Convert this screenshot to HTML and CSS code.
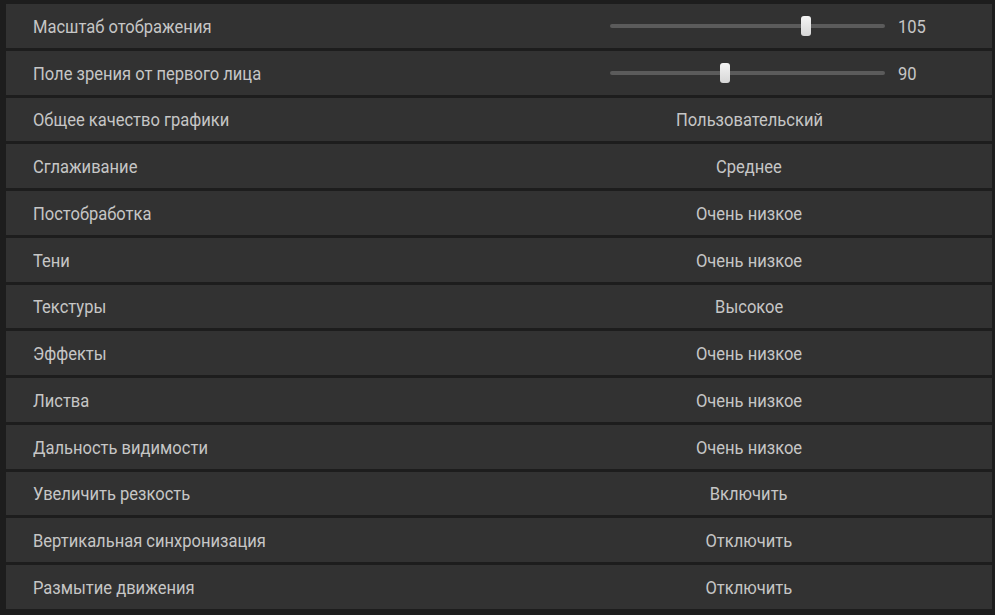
FILE: index.html
```html
<!DOCTYPE html>
<html lang="ru">
<head>
    <meta charset="UTF-8">
    <title>Настройки графики</title>
    <link rel="stylesheet" href="styles.css">
</head>
<body>
    <div class="settings">
        <div class="row">
            <div class="label"><span>Масштаб отображения</span></div>
            <div class="control slider-control">
                <div class="slider"><div class="track"></div><div class="thumb" style="left: 69.5%"></div></div>
                <div class="slider-value"><span>105</span></div>
            </div>
        </div>
        <div class="row">
            <div class="label"><span>Поле зрения от первого лица</span></div>
            <div class="control slider-control">
                <div class="slider"><div class="track"></div><div class="thumb" style="left: 40%"></div></div>
                <div class="slider-value"><span>90</span></div>
            </div>
        </div>
        <div class="row"><div class="label"><span>Общее качество графики</span></div><div class="control"><span>Пользовательский</span></div></div>
        <div class="row"><div class="label"><span>Сглаживание</span></div><div class="control"><span>Среднее</span></div></div>
        <div class="row"><div class="label"><span>Постобработка</span></div><div class="control"><span>Очень низкое</span></div></div>
        <div class="row"><div class="label"><span>Тени</span></div><div class="control"><span>Очень низкое</span></div></div>
        <div class="row"><div class="label"><span>Текстуры</span></div><div class="control"><span>Высокое</span></div></div>
        <div class="row"><div class="label"><span>Эффекты</span></div><div class="control"><span>Очень низкое</span></div></div>
        <div class="row"><div class="label"><span>Листва</span></div><div class="control"><span>Очень низкое</span></div></div>
        <div class="row"><div class="label"><span>Дальность видимости</span></div><div class="control"><span>Очень низкое</span></div></div>
        <div class="row"><div class="label"><span>Увеличить резкость</span></div><div class="control"><span>Включить</span></div></div>
        <div class="row"><div class="label"><span>Вертикальная синхронизация</span></div><div class="control"><span>Отключить</span></div></div>
        <div class="row"><div class="label"><span>Размытие движения</span></div><div class="control"><span>Отключить</span></div></div>
    </div>
</body>
</html>
```

FILE: styles.css
```css
html, body {
    margin: 0;
    height: 100%;
}
body {
    background: #1d1d1d;
    font-family: Roboto, "Liberation Sans", sans-serif;
    font-size: 19px;
    color: #c6c6c6;
    overflow: hidden;
}
.settings {
    display: grid;
    grid-auto-rows: 43.75px;
    row-gap: 3px;
    padding: 4px 3px 0 6px;
}
.row {
    display: grid;
    grid-template-columns: 604px 278px 1fr;
    align-items: center;
    background: #323232;
}
.row span {
    display: inline-block;
    transform: scaleX(0.87);
    white-space: nowrap;
}
.label {
    padding: 1px 0 0 27px;
}
.label span {
    transform-origin: left center;
}
.control {
    padding-top: 1px;
    text-align: center;
}
.slider-control {
    display: flex;
    align-items: center;
    grid-column: 2 / 4;
    padding-top: 0;
}
.slider {
    position: relative;
    width: 275px;
    height: 20px;
}
.track {
    position: absolute;
    left: 0;
    right: 0;
    top: 8px;
    height: 4px;
    border-radius: 2px;
    background: #5b5b5b;
}
.thumb {
    position: absolute;
    top: 0;
    width: 10px;
    height: 20px;
    border-radius: 3px;
    background: linear-gradient(#f4f4f4, #d6d6d6);
}
.slider-value {
    margin-left: 13px;
    padding-top: 1px;
}
.slider-value span {
    transform-origin: left center;
}
```
